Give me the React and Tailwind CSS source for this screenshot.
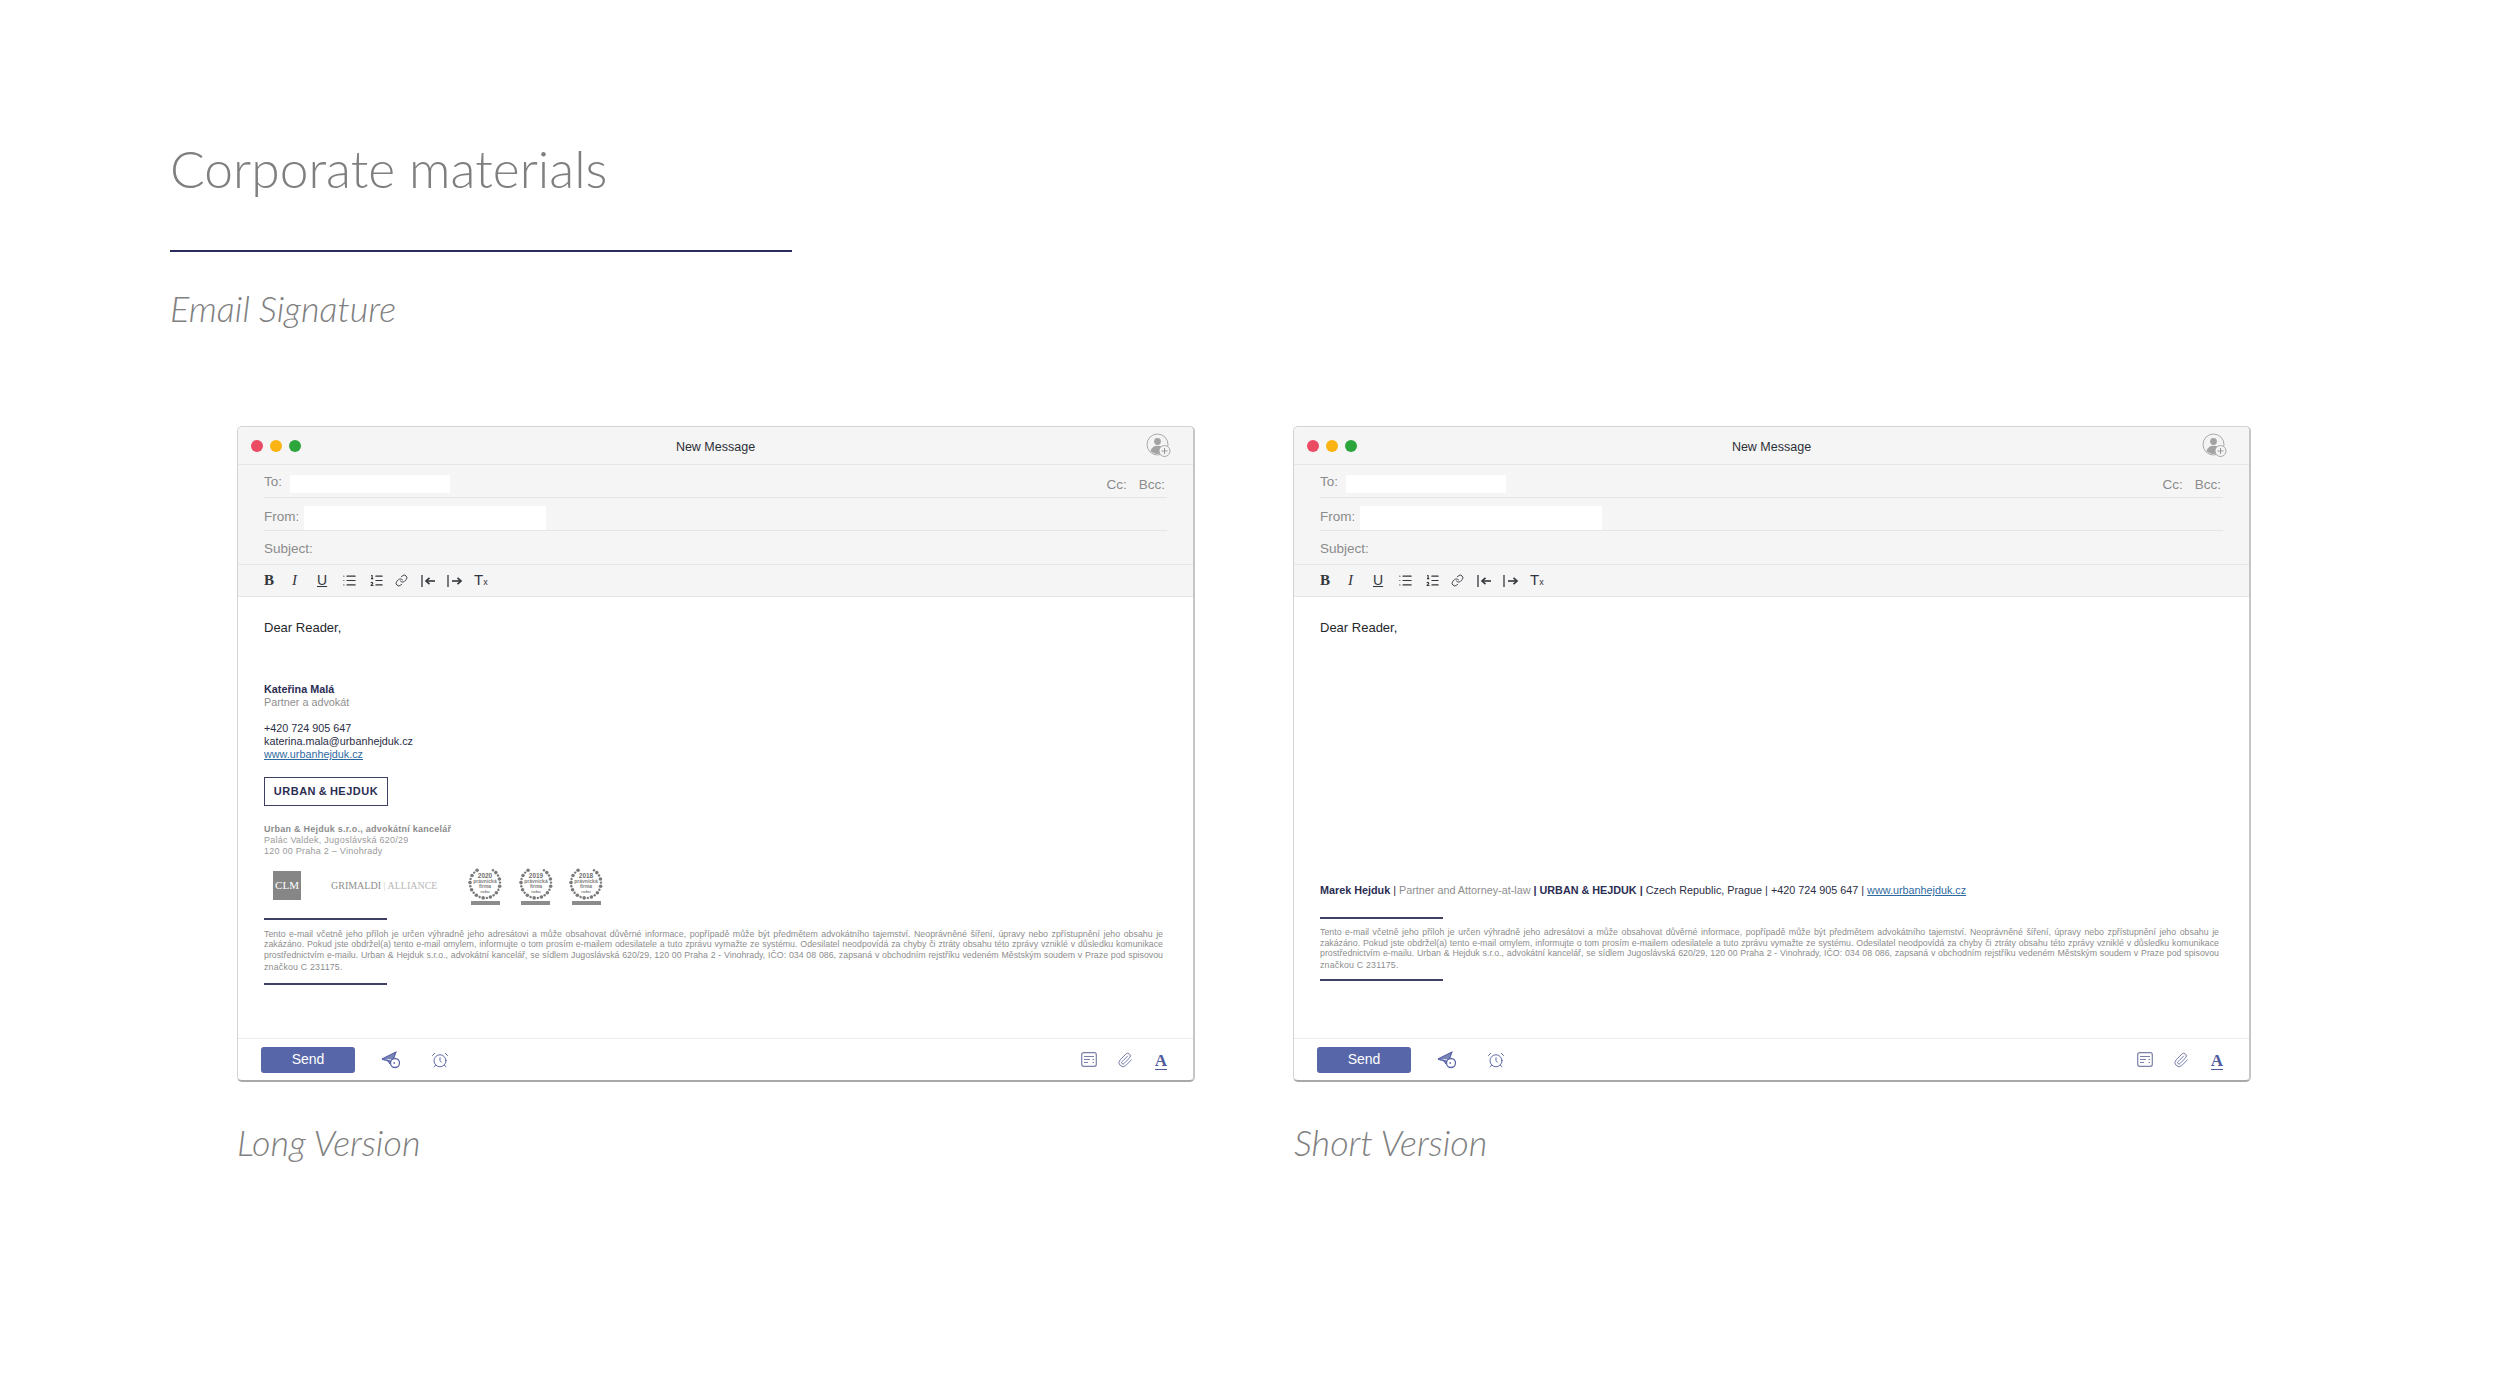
import { AlarmClock, Link, List, ListOrdered, Paperclip } from 'lucide-react';

const disclaimer = [
  'Tento e-mail včetně jeho příloh je určen výhradně jeho adresátovi a může obsahovat důvěrné informace, popřípadě může být předmětem advokátního tajemství. Neoprávněné šíření, úpravy nebo zpřístupnění jeho obsahu je',
  'zakázáno. Pokud jste obdržel(a) tento e-mail omylem, informujte o tom prosím e-mailem odesilatele a tuto zprávu vymažte ze systému. Odesilatel neodpovídá za chyby či ztráty obsahu této zprávy vzniklé v důsledku komunikace',
  'prostřednictvím e-mailu. Urban & Hejduk s.r.o., advokátní kancelář, se sídlem Jugoslávská 620/29, 120 00 Praha 2 - Vinohrady, IČO: 034 08 086, zapsaná v obchodním rejstříku vedeném Městským soudem v Praze pod spisovou',
];

function IndentIcon({ flip }) {
  return (
    <svg width="15" height="14" viewBox="0 0 15 14" fill="none" stroke="#33363b" strokeWidth="1.3">
      <path d="M1 1v12" />
      {flip ? (
        <>
          <path d="M14 7H5.5" strokeWidth="1.6" />
          <path d="M8.5 3.8 5 7l3.5 3.2" strokeWidth="1.6" />
        </>
      ) : (
        <>
          <path d="M5 7h8.5" strokeWidth="1.6" />
          <path d="M10.5 3.8 14 7l-3.5 3.2" strokeWidth="1.6" />
        </>
      )}
    </svg>
  );
}

function AvatarAdd() {
  return (
    <svg width="26" height="26" viewBox="0 0 26 26" fill="none">
      <circle cx="11.5" cy="11.5" r="10.5" stroke="#a9a9a9" strokeWidth="1" fill="#f4f4f4" />
      <circle cx="11.5" cy="8.5" r="3.4" fill="#a3a3a3" />
      <path d="M4.5 18c1-3.6 3.8-5.2 7-5.2s6 1.6 7 5.2c-2 2-4.4 3-7 3s-5-1-7-3Z" fill="#a3a3a3" />
      <circle cx="18.5" cy="18" r="5.5" fill="#f4f4f4" stroke="#a9a9a9" />
      <path d="M18.5 15v6M15.5 18h6" stroke="#9a9a9a" />
    </svg>
  );
}

function SendLaterIcon() {
  return (
    <svg width="20" height="18" viewBox="0 0 20 18" fill="none" stroke="#5b66a6" strokeWidth="1.3" strokeLinejoin="round">
      <path d="M1 8 15 1l-3 7.5" fill="#7c85b8" />
      <path d="M1 8l9 2.5" />
      <path d="M7 9.6 9 13" />
      <circle cx="14" cy="12" r="4.5" fill="#fff" />
      <path d="M14 12h-1.6" />
    </svg>
  );
}

function TemplateIcon() {
  return (
    <svg width="16" height="15" viewBox="0 0 16 15" fill="none" stroke="#7b80a8" strokeWidth="1.2">
      <rect x="0.7" y="0.7" width="14.6" height="13.6" rx="2" />
      <path d="M3 4.5h10M3 7.5h6M11.5 7.5H13M3 10.5h4M11.5 10.5H13" />
    </svg>
  );
}

function Wreath({ year }) {
  const dots = [];
  for (let i = 0; i < 22; i++) {
    const angle = ((32 + i * (296 / 21)) * Math.PI) / 180;
    dots.push([18 + Math.sin(angle) * 15, 17 - Math.cos(angle) * 15, i % 2 ? 1.8 : 1.2]);
  }
  return (
    <div className="flex flex-col items-center w-[36px]">
      <svg width="36" height="34" viewBox="0 0 36 34" className="font-['Liberation_Sans',sans-serif]">
        {dots.map(([cx, cy, r], i) => (
          <circle key={i} cx={cx} cy={cy} r={r} fill="#7a7a7a" />
        ))}
        <text x="18" y="11.5" textAnchor="middle" fontSize="6.5" fontWeight="700" fill="#6f6f6f">{year}</text>
        <text x="18" y="17" textAnchor="middle" fontSize="5" fontWeight="700" fill="#808080">právnická</text>
        <text x="18" y="22" textAnchor="middle" fontSize="5" fontWeight="700" fill="#808080">firma</text>
        <text x="18" y="26.5" textAnchor="middle" fontSize="4.4" fontWeight="700" fill="#808080">roku</text>
      </svg>
      <div className="w-[29px] h-[4px] bg-[#8c8c8c] mt-[1px]" />
    </div>
  );
}

function Disclaimer() {
  return (
    <div className="text-[8.8px] leading-[10.5px] text-[#8d8d8d]">
      {disclaimer.map((line) => (
        <div key={line} className="[text-align:justify] [text-align-last:justify] w-[899px]">{line}</div>
      ))}
      <div className="mt-[1.5px] tracking-[0.2px]">značkou C 231175.</div>
    </div>
  );
}

function MailWindow({ children }) {
  return (
    <div className="w-[958px] h-[656px] flex flex-col rounded-[5px] border border-[#d4d4d4] border-b-2 border-b-[#a8a8a8] border-r-2 border-r-[#c6c6c6] bg-white overflow-hidden">
      <div className="bg-[#f5f5f5] text-[13.5px] text-[#8b8b8b]">
        <div className="h-[38px] flex items-center pl-[13px] pr-[21px] border-b border-[#e6e6e6]">
          <div className="flex gap-[7px] w-[50px]">
            <div className="w-[12px] h-[12px] rounded-full bg-[#ea4c64]" />
            <div className="w-[12px] h-[12px] rounded-full bg-[#fbb314]" />
            <div className="w-[12px] h-[12px] rounded-full bg-[#2ca63c]" />
          </div>
          <div className="flex-1 text-center text-[12.5px] text-[#2c2f36] pt-[3px]">New Message</div>
          <div className="w-[42px] flex justify-end"><AvatarAdd /></div>
        </div>
        <div className="mx-[26px]">
          <div className="h-[33px] flex items-center border-b border-[#e6e6e6]">
            <span className="mt-[2px]">To:</span>
            <div className="ml-[8px] w-[160px] h-[18px] bg-white mt-[6px]" />
            <span className="ml-auto mt-[8px]">Cc:</span>
            <span className="ml-[12px] mr-[2px] mt-[8px]">Bcc:</span>
          </div>
          <div className="h-[33px] flex items-center border-b border-[#e6e6e6]">
            <span className="mt-[6px]">From:</span>
            <div className="ml-[5px] w-[242px] h-[24px] bg-white mt-[8px]" />
          </div>
          <div className="h-[33px] flex items-center"><span className="mt-[3px]">Subject:</span></div>
        </div>
        <div className="h-[33px] flex items-center pl-[26px] border-y border-[#e6e6e6] text-[#33363b]">
          <span className="w-[28px] font-['Liberation_Serif',serif] font-bold text-[15px]">B</span>
          <span className="w-[25px] font-['Liberation_Serif',serif] italic text-[15px]">I</span>
          <span className="w-[25px] text-[14px] underline">U</span>
          <List size={15} strokeWidth={1.8} className="w-[15px] mr-[12px]" />
          <ListOrdered size={15} strokeWidth={1.8} className="w-[15px] mr-[11px]" />
          <Link size={13} strokeWidth={1.7} className="w-[13px] mr-[13px]" />
          <IndentIcon flip />
          <div className="w-[11px]" />
          <IndentIcon />
          <div className="w-[12px]" />
          <span className="text-[15px]">T<span className="text-[9px]">x</span></span>
        </div>
      </div>
      <div className="flex-1 pl-[26px] font-['Liberation_Sans',sans-serif]">{children}</div>
      <div className="h-[42px] flex items-center pl-[23px] pr-[26px] border-t border-[#ececec]">
        <button className="w-[94px] h-[26px] rounded-[3px] bg-[#5766a8] text-white text-[14px]">Send</button>
        <div className="ml-[26px]"><SendLaterIcon /></div>
        <AlarmClock size={18} strokeWidth={1.3} color="#5b66a6" className="ml-[30px]" />
        <div className="ml-auto"><TemplateIcon /></div>
        <Paperclip size={16} strokeWidth={1.4} color="#6d74a6" className="ml-[20px]" />
        <span className="ml-[22px] font-['Liberation_Serif',serif] font-bold text-[17px] leading-[16px] text-[#4f5a9c] border-b border-[#4f5a9c] mt-[3px]">A</span>
      </div>
    </div>
  );
}

function LongBody() {
  return (
    <>
      <div className="pt-[22px] text-[13px] leading-[18px] text-[#26282c]">Dear Reader,</div>
      <div className="mt-[46px] text-[10.8px] leading-[13px]">
        <div className="font-bold text-[#2b2d52]">Kateřina Malá</div>
        <div className="text-[#8e8e8e]">Partner a advokát</div>
        <div className="mt-[13px] text-[#2b2d45]">+420 724 905 647</div>
        <div className="text-[#2b2d45]">katerina.mala@urbanhejduk.cz</div>
        <div className="text-[#2f6a9f] underline">www.urbanhejduk.cz</div>
      </div>
      <div className="mt-[16px] w-[124px] h-[29px] border-[1.5px] border-[#3d3f63] flex items-center justify-center font-bold text-[11px] tracking-[0.5px] text-[#2b2d52]">URBAN&thinsp;&amp;&thinsp;HEJDUK</div>
      <div className="mt-[18px] text-[9px] leading-[11px] text-[#9a9a9a] tracking-[0.25px]">
        <div className="font-bold text-[#8c8c8c]">Urban &amp; Hejduk s.r.o., advokátní kancelář</div>
        <div>Palác Valdek, Jugoslávská 620/29</div>
        <div>120 00 Praha 2 – Vinohrady</div>
      </div>
      <div className="mt-[9px] ml-[9px] flex items-start h-[40px]">
        <div className="mt-[5px] w-[28px] h-[29px] bg-[#868686] text-white font-['Liberation_Serif',serif] text-[11px] flex items-center justify-center">CLM</div>
        <div className="mt-[13px] ml-[30px] w-[103px] whitespace-nowrap font-['Liberation_Serif',serif] text-[10px] leading-[14px] text-[#8e8e8e]">
          GRIMALDI <span className="text-[#d0d0d0]">|</span> <span className="text-[#b8b8b8]">ALLIANCE</span>
        </div>
        <div className="ml-[33px] flex gap-[14.5px]">
          <Wreath year="2020" />
          <Wreath year="2019" />
          <Wreath year="2018" />
        </div>
      </div>
      <div className="mt-[12px] w-[123px] h-[2px] bg-[#3d3f63]" />
      <div className="mt-[8.5px]"><Disclaimer /></div>
      <div className="mt-[10.5px] w-[123px] h-[2px] bg-[#3d3f63]" />
    </>
  );
}

function ShortBody() {
  return (
    <>
      <div className="pt-[22px] text-[13px] leading-[18px] text-[#26282c]">Dear Reader,</div>
      <div className="mt-[247px] whitespace-nowrap text-[10.8px] leading-[13px] text-[#2b2d45]">
        <b className="text-[#2b2d52]">Marek Hejduk</b> | <span className="text-[#8e8e8e]">Partner and Attorney-at-law</span> <b className="text-[#2b2d52]">| URBAN &amp; HEJDUK |</b> Czech Republic, Prague | +420 724 905 647 | <span className="text-[#2f6a9f] underline">www.urbanhejduk.cz</span>
      </div>
      <div className="mt-[19.5px] w-[123px] h-[2px] bg-[#3d3f63]" />
      <div className="mt-[8.5px]"><Disclaimer /></div>
      <div className="mt-[8.5px] w-[123px] h-[2px] bg-[#3d3f63]" />
    </>
  );
}

export default function App() {
  return (
    <div className="w-[2500px] h-[1391px] bg-white pl-[170px] pt-[133px] font-['Liberation_Sans',sans-serif] overflow-hidden">
      <h1 className="font-['Lato',sans-serif] font-light text-[51.5px] leading-[70px] text-[#7f7f7f]">Corporate materials</h1>
      <div className="mt-[47px] w-[622px] h-[2px] bg-[#2b2d5b]" />
      <h2 className="mt-[34px] font-['Lato',sans-serif] font-light italic text-[36px] leading-[44px] text-[#808080]">Email Signature</h2>
      <div className="mt-[96px] ml-[67px] flex gap-[98px]">
        <div>
          <MailWindow><LongBody /></MailWindow>
          <div className="mt-[38px] font-['Lato',sans-serif] font-light italic text-[36px] leading-[44px] text-[#808080]">Long Version</div>
        </div>
        <div>
          <MailWindow><ShortBody /></MailWindow>
          <div className="mt-[38px] ml-[1px] font-['Lato',sans-serif] font-light italic text-[36px] leading-[44px] text-[#808080]">Short Version</div>
        </div>
      </div>
    </div>
  );
}
